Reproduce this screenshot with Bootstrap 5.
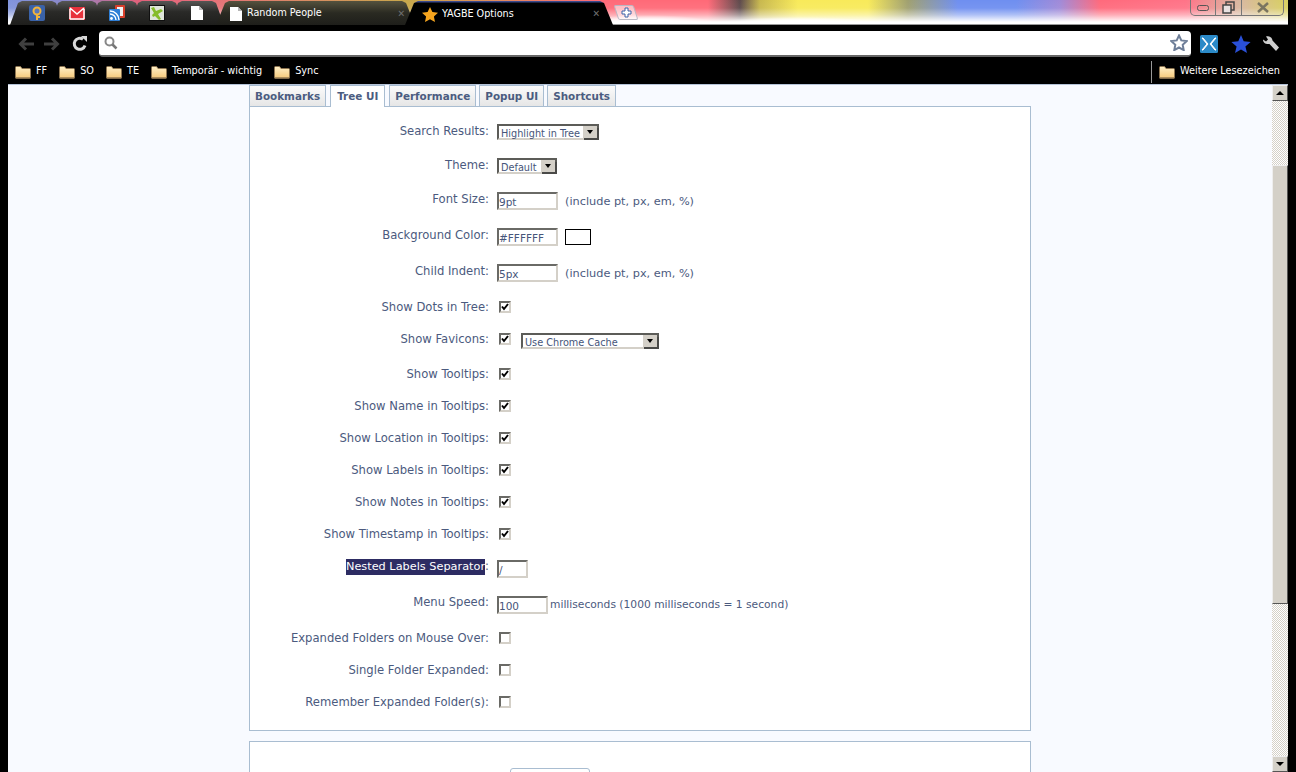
<!DOCTYPE html>
<html lang="en">
<head>
<meta charset="utf-8">
<title>YAGBE Options</title>
<link rel="stylesheet" href="https://cdn.jsdelivr.net/npm/bootstrap@5.3.0/dist/css/bootstrap.min.css">
<style>
html,body{height:100%;overflow:hidden}
body{background:#000;font-family:"DejaVu Sans",sans-serif;color:#4b5a7e;font-size:11.6px}
.shell{width:1296px;height:772px}
.iconsrc{position:absolute;width:0;height:0}
.titlebar{height:30px;background:#000;padding:0 8px}
.sky{height:25px;flex:1;border-bottom:1px solid #999;position:relative;background:
 radial-gradient(70px 9px at 640px 24px,#fff 40%,transparent),
 radial-gradient(90px 8px at 790px 25px,#fff 50%,transparent),
 linear-gradient(180deg,transparent 0,rgba(255,255,255,.05) 8px,rgba(255,255,255,.45) 15px,#fff 22px,#fff 100%),
 linear-gradient(90deg,#8094dc 0,#8a86c8 60px,#e0607a 130px,#e8707a 200px,#c8a84a 400px,#ff6a78 592px,#ff6a78 700px,#5e4a4c 732px,#c8b84e 752px,#f8ea5a 790px,#f8ea5a 860px,#a0a070 900px,#6f8ff0 950px,#6f8ff0 1008px,#a08ad8 1052px,#ff6a7c 1092px,#ff7488 1178px,#d8b8a0 1232px,#d8d060 1280px)}
.tabstrip{position:absolute;left:2px;top:1px;height:24px}
.ptab{width:54px;height:24px;margin-right:-14px;flex:none;background:linear-gradient(#565654,#2a2a28 45%,#1e1e1c);clip-path:polygon(0 100%,8px 2px,12px 0,42px 0,46px 2px,54px 100%)}
.ptab.last{margin-right:0}
.ltab{flex:none;height:24px;color:#fff;font-family:"DejaVu Sans Condensed","DejaVu Sans",sans-serif;font-stretch:condensed;font-size:10.7px;white-space:nowrap}
.ltab.bg1{width:199px;margin-left:-8px;padding:1px 10px 0 14px;gap:5px;background:linear-gradient(#55523e,#2a2a22 50%,#1e1e1a);clip-path:polygon(0 100%,9px 2px,13px 0,calc(100% - 13px) 0,calc(100% - 9px) 2px,100% 100%)}
.ltab.on{width:208px;height:29px;margin-left:-10px;padding:0 13px 3px 17px;gap:4px;background:linear-gradient(#3b4a8c 0,#3b4a8c 1px,#000 2px);clip-path:polygon(0 83%,9px 2px,13px 0,calc(100% - 13px) 0,calc(100% - 9px) 2px,100% 83%,100% 100%,0 100%);position:relative;z-index:1}
.tabx{color:#6e6e6e;font-size:10px;margin-left:auto;line-height:1}
.newtab{width:20px;height:15px;border:1px solid #b8b8c4;background:rgba(255,255,255,.55);transform:skewX(18deg);border-radius:2px;margin-top:4px;margin-left:3px}
.unskew{transform:skewX(-18deg)}
.winbtns{position:absolute;right:4px;top:0;height:16px;border:1px solid #777;border-top:0;border-radius:0 0 5px 5px}
.winbtns span{border-right:1px solid #777}
.winbtns span:last-child{border-right:0}
.wb1{width:25px}.wb2{width:26px}.wb3{width:41px}
.toolbar{height:27px;padding:0 8px 0 18px}
.navic{width:26px;flex:none}
.navic.rl{padding-left:2px}
.urlbar{width:1092px;height:26px;flex:none;background:#fff;border-bottom:2px solid #666;border-radius:4px;margin-left:3px;padding:0 3px 0 5px}
.tb1{margin-left:9px}.tb2{margin-left:13px}.tb3{margin-left:11px}
.bmarks{height:27px;padding:2px 16px 0 15px;color:#fff;font-family:"DejaVu Sans Condensed","DejaVu Sans",sans-serif;font-stretch:condensed;font-size:10.8px;gap:12px;white-space:nowrap}
.bmarks .tag{gap:5px}
.bmsep{width:1px;height:22px;background:#999;margin-left:auto;margin-right:-5px}
.viewport{height:688px;margin:0 8px;background:#f8faff;border-top:1px solid #b5c3d8}
.pagearea{flex:1;min-width:0;overflow:hidden}
.pagewrap{width:782px;margin:0 auto}
.tabrow{height:21px;gap:3px;position:relative;z-index:1}
.otab{height:21px;border:1px solid #a9bdd1;border-bottom:0;background:linear-gradient(#fbfbfb,#e6e6e6);font-weight:700;font-size:10.4px;padding:0 5px;color:#4b5c80;line-height:20px;white-space:nowrap}
.otab.first{margin-right:1px}
.otab.cur{background:#fff;height:22px;padding:0 6px;margin-right:1px}
.panel{background:#fff;border:1px solid #a9bdd1;width:782px}
.optlist{height:625px;padding-top:15px}
.optrow{display:flex}
.rowa{height:32px}.rowb{height:34px}.rowc{height:36px}.rowd{height:35px}
.lbl{width:239px;text-align:right;flex:none;line-height:18px;white-space:nowrap}
.sel{background:#2d2c63;color:#fff;display:inline-block;line-height:16px;font-size:11.3px}
.fld{margin-left:8px;display:flex;align-items:flex-start;line-height:23px;white-space:nowrap}
.txt{border:2px solid;border-color:#6a6a66 #d4d0c8 #d4d0c8 #6a6a66;height:18px;font:10.5px "DejaVu Sans",sans-serif;color:#46557a;padding:1px 0 0 0;margin-top:2px;outline:0;background:#fff}
.txt.low{margin-top:3px}
.w61{width:61px}.w31{width:31px}.w51{width:51px}
.note{margin-left:7px;font-size:11.3px}
.msnote{margin-left:2px;font-size:10.7px}
.chk{appearance:none;-webkit-appearance:none;width:12px;height:12px;margin:3px 0 0 2px;border:2px solid;border-color:#6a6a66 #d4d0c8 #d4d0c8 #6a6a66;background:#fff;display:block;flex:none}
.chk:checked{background:#fff url("data:image/svg+xml,%3Csvg xmlns='http://www.w3.org/2000/svg' width='8' height='8'%3E%3Cpath d='M1 3.500 3 6 7 1' fill='none' stroke='%23000' stroke-width='2'/%3E%3C/svg%3E") center/8px 8px no-repeat}
.dropx{border:2px solid;border-color:#5c5c58 #d4d0c8 #d4d0c8 #5c5c58;height:16px;background:#fff;display:flex;align-items:center;justify-content:space-between;font-family:"DejaVu Sans Condensed","DejaVu Sans",sans-serif;font-stretch:condensed;font-size:10.8px;line-height:1;margin-top:2px;padding-left:2px;color:#46557a;white-space:nowrap}
.dtxt{padding-top:5px}
.w102{width:102px}.w60{width:60px}.w138{width:138px;margin-left:10px;margin-top:3px}
.dropb{width:15px;height:12px;background:#d4d0c8;border-left:1px solid #fff;display:flex;align-items:center;justify-content:center;flex:none;box-shadow:2px 2px 0 #4a4a48,0 -2px 0 #5c5c58,2px -2px 0 #5c5c58}
.dropb i{border:3px solid transparent;border-top:4px solid #000;border-bottom:0;display:block}
.swatch{width:26px;height:16px;border:1px solid #000;background:#fff;margin:3px 0 0 7px}
.panel2{height:40px;margin-top:10px;border-bottom:0;overflow:hidden}
.savebtn{display:block;width:80px;height:30px;margin:26px 0 0 260px;border:1px solid #a9bdd1;border-radius:3px;background:#fff}
.sbar{width:16px;flex:none;background:conic-gradient(#d4d0c8 25%,#fff 0 50%,#d4d0c8 0 75%,#fff 0) 0 0/2px 2px}
.sbtn{height:16px;background:#d4d0c8;border:1px solid;border-color:#eee #555 #555 #eee;display:flex;align-items:center;justify-content:center}
.sbtn i{border:4px solid transparent;border-top:0;border-bottom:4px solid #000;display:block}
.sbtn.dn i{border-bottom:0;border-top:4px solid #000}
.sthumb{height:439px;margin-top:64px;background:#d4d0c8;border:1px solid;border-color:#eee #555 #555 #eee}
.sgap{flex:1}
</style>
</head>
<body>
<svg class="iconsrc" aria-hidden="true">
  <defs>
    <linearGradient id="fg" x1="0" y1="0" x2="0" y2="1"><stop offset="0" stop-color="#fff0c8"/><stop offset="1" stop-color="#f6c878"/></linearGradient>
    <symbol id="folder" viewBox="0 0 16 14"><path d="M.5 2.500q0-1 1-1h4l1.500 2h7.500q1 0 1 1v8q0 1-1 1h-13q-1 0-1-1z" fill="url(#fg)" stroke="#8d7450"/><path d="M1 13h14" stroke="#7a6346" stroke-width="1.200"/></symbol>
    <symbol id="doc" viewBox="0 0 12 14"><path d="M0 0h8l4 4v10H0z" fill="#fff"/><path d="M8 0l4 4H8z" fill="#b5b5b5"/></symbol>
  </defs>
</svg>
<div class="shell d-flex flex-column">
  <div class="titlebar d-flex">
    <div class="sky">
      <div class="tabstrip d-flex align-items-start">
        <div class="ptab d-flex align-items-center justify-content-center"><svg width="16" height="16" viewBox="0 0 16 16"><rect width="16" height="16" rx="2" fill="#3a62a8"/><circle cx="8" cy="6" r="3.500" fill="#5a78b8" stroke="#f2b43a" stroke-width="2"/><path d="M8 9v6M8 12h3" stroke="#f2b43a" stroke-width="2"/></svg></div>
        <div class="ptab d-flex align-items-center justify-content-center"><svg width="16" height="13" viewBox="0 0 16 13"><rect width="16" height="13" fill="#e8323c"/><path d="M1 1l7 6 7-6M1 12V2M15 12V2M1 12h14" fill="none" stroke="#fff" stroke-width="1.500"/></svg></div>
        <div class="ptab d-flex align-items-center justify-content-center"><svg width="16" height="16" viewBox="0 0 16 16"><rect x="6" y="0" width="10" height="13" rx="1" fill="#d8402c"/><rect x="8" y="2" width="6" height="9" fill="#f3f3f3"/><rect x="0" y="4" width="11" height="12" rx="1" fill="#2f7fd6"/><circle cx="2.500" cy="13.500" r="1.400" fill="#fff"/><path d="M1 9a6 6 0 0 1 6 6M1 6a9 9 0 0 1 9 9" stroke="#fff" fill="none" stroke-width="1.400"/></svg></div>
        <div class="ptab d-flex align-items-center justify-content-center"><svg width="16" height="16" viewBox="0 0 16 16"><rect width="16" height="16" fill="#111"/><rect x="1" y="1" width="14" height="14" fill="#dfe5da"/><path d="M2 3l3-1 2 4 5-2 2 2-5 3 3 5-2 1-4-4-2 1-1-2 2-2z" fill="#86bc2a"/></svg></div>
        <div class="ptab last d-flex align-items-center justify-content-center"><svg width="12" height="14"><use href="#doc"/></svg></div>
        <div class="ltab bg1 d-flex align-items-center"><svg width="12" height="14"><use href="#doc"/></svg><span>Random People</span><span class="tabx">✕</span></div>
        <div class="ltab on d-flex align-items-center"><svg width="16" height="15" viewBox="0 0 16 15"><path d="M8 0l2.400 5 5.600.7-4.100 3.800 1.100 5.500L8 12.300 3 15l1.100-5.500L0 5.700 5.600 5z" fill="#f7a51e"/></svg><span>YAGBE Options</span><span class="tabx">✕</span></div>
        <div class="newtab d-flex align-items-center justify-content-center"><svg class="unskew" width="11" height="11" viewBox="0 0 11 11"><path d="M4 1h3v3h3v3H7v3H4V7H1V4h3z" fill="#fff" stroke="#3a62a8"/></svg></div>
      </div>
      <div class="winbtns d-flex">
        <span class="wb1 d-flex align-items-center justify-content-center"><svg width="12" height="6"><rect x=".5" y=".5" width="11" height="5" rx="2" fill="none" stroke="#555"/></svg></span>
        <span class="wb2 d-flex align-items-center justify-content-center"><svg width="13" height="13"><rect x="4" y="1" width="8" height="8" fill="none" stroke="#444" stroke-width="1.500"/><rect x="1" y="4" width="8" height="8" fill="#e8e0e0" stroke="#444" stroke-width="1.500"/></svg></span>
        <span class="wb3 d-flex align-items-center justify-content-center"><svg width="14" height="11"><path d="M2 1l10 9M12 1L2 10" stroke="#7a7560" stroke-width="2.500"/></svg></span>
      </div>
    </div>
  </div>
  <div class="toolbar d-flex align-items-center">
    <div class="navic d-flex"><svg width="16" height="14" viewBox="0 0 16 14"><path d="M8 1.500 2.500 7 8 12.500M3 7h13" fill="none" stroke="#3f3f3f" stroke-width="3"/></svg></div>
    <div class="navic d-flex"><svg width="16" height="14" viewBox="0 0 16 14"><path d="M8 1.500 13.500 7 8 12.500M13 7H0" fill="none" stroke="#3f3f3f" stroke-width="3"/></svg></div>
    <div class="navic rl d-flex"><svg width="16" height="16" viewBox="0 0 16 16"><path d="M13 9.500A5.500 5.500 0 1 1 11 3.300" fill="none" stroke="#d8d8d8" stroke-width="3"/><path d="M9 0l6 0 0 6z" fill="#d8d8d8"/></svg></div>
    <div class="urlbar d-flex align-items-center">
      <svg width="14" height="14" viewBox="0 0 14 14"><circle cx="5.500" cy="5.500" r="4" fill="none" stroke="#888" stroke-width="2"/><path d="M8.500 8.500l4 4" stroke="#777" stroke-width="2.500"/></svg>
      <svg class="ms-auto" width="18" height="17" viewBox="0 0 18 17"><path d="M9 1.500l2.300 4.900 5.300.7-3.900 3.700 1 5.300L9 13.500l-4.700 2.600 1-5.300-3.900-3.700 5.300-.7z" fill="#fff" stroke="#6f7f99" stroke-width="2"/></svg>
    </div>
    <svg class="tb1" width="18" height="18" viewBox="0 0 18 18"><rect width="18" height="18" rx="1.500" fill="#2b8ac8"/><path d="M2 3l5 6-5 6 1 0 5-6-5-6zM16 3l-5 6 5 6-1 0-5-6 5-6z" fill="#fff" stroke="#fff"/></svg>
    <svg class="tb2" width="20" height="18" viewBox="0 0 20 18"><path d="M10 0l2.700 6.300 6.900.6-5.200 4.500 1.600 6.600L10 14.500 4 18l1.600-6.600L.4 6.900l6.900-.6z" fill="#2a50d8"/></svg>
    <svg class="tb3" width="18" height="18" viewBox="0 0 18 18"><path d="M1 4.500 4 6.500 6 4.500 4 1.500C7 .5 10 2 10.500 5.500L17 12.500 14 16 7.500 9C4 9.500 1 8 1 4.500z" fill="#cfcfcf"/></svg>
  </div>
  <div class="bmarks d-flex align-items-center">
    <span class="tag d-flex align-items-center"><svg width="16" height="14"><use href="#folder"/></svg>FF</span>
    <span class="tag d-flex align-items-center"><svg width="16" height="14"><use href="#folder"/></svg>SO</span>
    <span class="tag d-flex align-items-center"><svg width="16" height="14"><use href="#folder"/></svg>TE</span>
    <span class="tag d-flex align-items-center"><svg width="16" height="14"><use href="#folder"/></svg>Temporär - wichtig</span>
    <span class="tag d-flex align-items-center"><svg width="16" height="14"><use href="#folder"/></svg>Sync</span>
    <div class="bmsep"></div>
    <span class="tag d-flex align-items-center"><svg width="16" height="14"><use href="#folder"/></svg>Weitere Lesezeichen</span>
  </div>
  <div class="viewport d-flex">
    <div class="pagearea">
      <div class="pagewrap">
        <div class="tabrow d-flex">
          <div class="otab first">Bookmarks</div>
          <div class="otab cur">Tree UI</div>
          <div class="otab">Performance</div>
          <div class="otab">Popup UI</div>
          <div class="otab">Shortcuts</div>
        </div>
        <div class="panel optlist">
          <div class="optrow rowb"><div class="lbl">Search Results:</div><div class="fld"><div class="dropx w102"><span class="dtxt">Highlight in Tree</span><span class="dropb"><i></i></span></div></div></div>
          <div class="optrow rowb"><div class="lbl">Theme:</div><div class="fld"><div class="dropx w60"><span class="dtxt">Default</span><span class="dropb"><i></i></span></div></div></div>
          <div class="optrow rowc"><div class="lbl">Font Size:</div><div class="fld"><input class="txt w61" value="9pt"><span class="note">(include pt, px, em, %)</span></div></div>
          <div class="optrow rowc"><div class="lbl">Background Color:</div><div class="fld"><input class="txt w61" value="#FFFFFF"><span class="swatch"></span></div></div>
          <div class="optrow rowc"><div class="lbl">Child Indent:</div><div class="fld"><input class="txt w61" value="5px"><span class="note">(include pt, px, em, %)</span></div></div>
          <div class="optrow rowa"><div class="lbl">Show Dots in Tree:</div><div class="fld"><input type="checkbox" class="chk" checked></div></div>
          <div class="optrow rowd"><div class="lbl">Show Favicons:</div><div class="fld"><input type="checkbox" class="chk" checked><div class="dropx w138"><span class="dtxt">Use Chrome Cache</span><span class="dropb"><i></i></span></div></div></div>
          <div class="optrow rowa"><div class="lbl">Show Tooltips:</div><div class="fld"><input type="checkbox" class="chk" checked></div></div>
          <div class="optrow rowa"><div class="lbl">Show Name in Tooltips:</div><div class="fld"><input type="checkbox" class="chk" checked></div></div>
          <div class="optrow rowa"><div class="lbl">Show Location in Tooltips:</div><div class="fld"><input type="checkbox" class="chk" checked></div></div>
          <div class="optrow rowa"><div class="lbl">Show Labels in Tooltips:</div><div class="fld"><input type="checkbox" class="chk" checked></div></div>
          <div class="optrow rowa"><div class="lbl">Show Notes in Tooltips:</div><div class="fld"><input type="checkbox" class="chk" checked></div></div>
          <div class="optrow rowa"><div class="lbl">Show Timestamp in Tooltips:</div><div class="fld"><input type="checkbox" class="chk" checked></div></div>
          <div class="optrow rowc"><div class="lbl"><span class="sel">Nested Labels Separator</span>:</div><div class="fld"><input class="txt low w31" value="/"></div></div>
          <div class="optrow rowc"><div class="lbl">Menu Speed:</div><div class="fld"><input class="txt low w51" value="100"><span class="msnote">milliseconds (1000 milliseconds = 1 second)</span></div></div>
          <div class="optrow rowa"><div class="lbl">Expanded Folders on Mouse Over:</div><div class="fld"><input type="checkbox" class="chk"></div></div>
          <div class="optrow rowa"><div class="lbl">Single Folder Expanded:</div><div class="fld"><input type="checkbox" class="chk"></div></div>
          <div class="optrow rowa"><div class="lbl">Remember Expanded Folder(s):</div><div class="fld"><input type="checkbox" class="chk"></div></div>
        </div>
        <div class="panel panel2"><span class="savebtn"></span></div>
      </div>
    </div>
    <div class="sbar d-flex flex-column">
      <div class="sbtn"><i></i></div>
      <div class="sthumb"></div>
      <div class="sgap"></div>
      <div class="sbtn dn"><i></i></div>
    </div>
  </div>
</div>
<script src="https://cdn.jsdelivr.net/npm/bootstrap@5.3.0/dist/js/bootstrap.bundle.min.js"></script>
</body>
</html>
